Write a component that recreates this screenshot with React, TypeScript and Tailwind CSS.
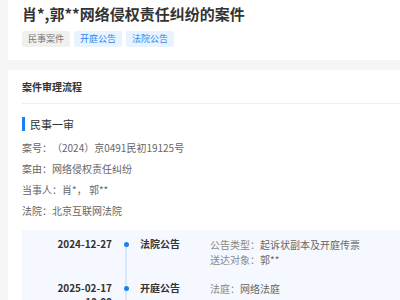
import React from "react";

const font = { fontFamily: '"Noto Sans CJK SC", "Noto Sans", sans-serif' };

function Row({ label, value }: { label: string; value: string }) {
  return (
    <div className="h-[21px] flex items-center text-[10px] text-[#666]">
      <span>{label}：</span>
      <span>{value}</span>
    </div>
  );
}

function TimelineItem({
  date,
  time,
  title,
  lines,
  last,
}: {
  date: string;
  time?: string;
  title: string;
  lines: { k: string; v: string }[];
  last?: boolean;
}) {
  return (
    <div className="flex h-[44px]">
      <div className="w-[90px] text-right text-[10px] font-bold text-[#333] leading-[14px]">
        <div>{date}</div>
        {time && <div>{time}</div>}
      </div>
      <div className="w-[28px] relative flex justify-center">
        <div className="w-[5px] h-[5px] rounded-full bg-[#1a7ff0] mt-[5px] z-10" />
        <div
          className={
            last
              ? "absolute left-1/2 -translate-x-1/2 top-[7px] bottom-[-20px] w-px bg-[#b9d8fb]"
              : "absolute left-1/2 -translate-x-1/2 top-[7px] bottom-[-7px] w-px bg-[#b9d8fb]"
          }
        />
      </div>
      <div className="w-[70px] text-[10px] font-bold text-[#333] leading-[14px]">{title}</div>
      <div className="flex-1 text-[10px] text-[#888] leading-[15px]">
        {lines.map((l, i) => (
          <div key={i}>
            {l.k}：<span className="text-[#666]">{l.v}</span>
          </div>
        ))}
      </div>
    </div>
  );
}

export default function App() {
  return (
    <div
      className="w-[400px] h-[300px] overflow-hidden bg-[#f5f5f5] pl-2 flex flex-col gap-[10px]"
      style={font}
    >
      <div className="bg-white h-[60px] shrink-0 pl-[14px] pt-[3px]">
        <div className="text-[15px] font-bold text-[#333] leading-[22px]">
          肖*,郭**网络侵权责任纠纷的案件
        </div>
        <div className="flex gap-[4px] mt-[6px]">
          <span className="h-[16px] px-[6px] flex items-center text-[9px] bg-[#f0f0f0] text-[#777] rounded-[2px]">
            民事案件
          </span>
          <span className="h-[16px] px-[6px] flex items-center text-[9px] bg-[#e8f3ff] text-[#2f86f0] rounded-[2px]">
            开庭公告
          </span>
          <span className="h-[16px] px-[6px] flex items-center text-[9px] bg-[#e8f3ff] text-[#2f86f0] rounded-[2px]">
            法院公告
          </span>
        </div>
      </div>
      <div className="bg-white flex-1 pl-[14px]">
        <div className="h-[34px] flex items-center text-[10px] font-bold text-[#333] border-b border-[#eeeeee]">
          案件审理流程
        </div>
        <div className="flex items-center gap-[5px] mt-[11px] h-[18px]">
          <div className="w-[3px] h-[14px] bg-[#1a7ff0]" />
          <div className="text-[11px] text-[#333]">民事一审</div>
        </div>
        <div className="mt-[4px]">
          <Row label="案号" value="（2024）京0491民初19125号" />
          <Row label="案由" value="网络侵权责任纠纷" />
          <Row label="当事人" value="肖*， 郭**" />
          <Row label="法院" value="北京互联网法院" />
        </div>
        <div className="bg-[#f5f9ff] mt-[9px] pt-[7px] h-[100px]">
          <TimelineItem
            date="2024-12-27"
            title="法院公告"
            lines={[
              { k: "公告类型", v: "起诉状副本及开庭传票" },
              { k: "送达对象", v: "郭**" },
            ]}
          />
          <TimelineItem
            date="2025-02-17"
            time="10:00"
            title="开庭公告"
            lines={[{ k: "法庭", v: "网络法庭" }]}
            last
          />
        </div>
      </div>
    </div>
  );
}
